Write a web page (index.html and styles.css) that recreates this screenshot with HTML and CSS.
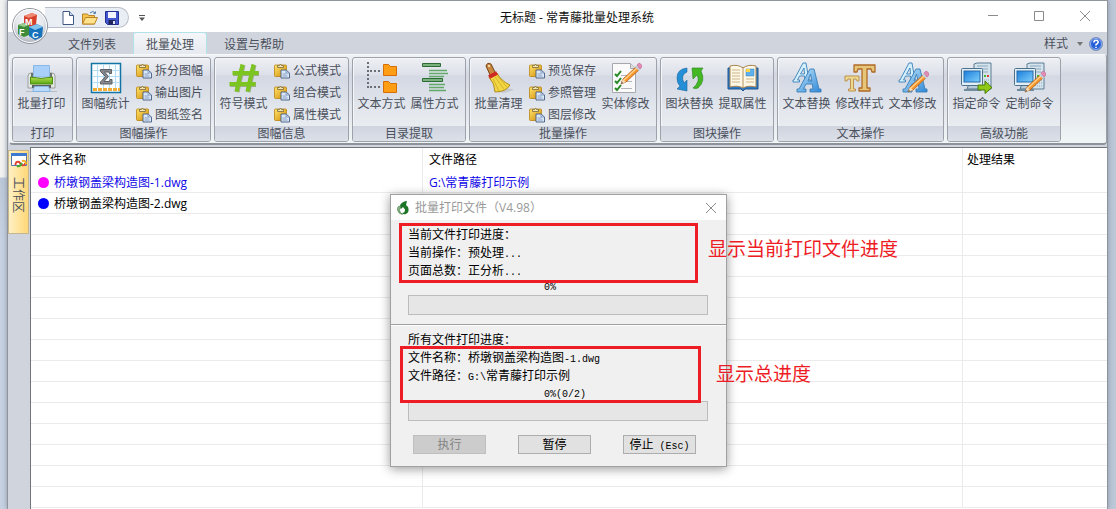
FILE: index.html
```html
<!DOCTYPE html>
<html lang="zh-CN">
<head>
<meta charset="utf-8">
<title>无标题 - 常青藤批量处理系统</title>
<link rel="stylesheet" href="styles.css">
</head>
<body>
<svg class="defs" aria-hidden="true">
  <defs>
    <linearGradient id="gBlue" x1="0" y1="0" x2="1" y2="1"><stop offset="0" stop-color="#c4e8fc"/><stop offset="1" stop-color="#2c87d8"/></linearGradient>
    <linearGradient id="gScreen" x1="0" y1="0" x2="1" y2="1"><stop offset="0" stop-color="#1c7fdc"/><stop offset="1" stop-color="#7fd0fb"/></linearGradient>
    <linearGradient id="gGold" x1="0" y1="0" x2="1" y2="1"><stop offset="0" stop-color="#ffe56b"/><stop offset="1" stop-color="#d18a08"/></linearGradient>
    <linearGradient id="gGreen" x1="0" y1="0" x2="0" y2="1"><stop offset="0" stop-color="#b4e04a"/><stop offset="1" stop-color="#5aa616"/></linearGradient>
    <radialGradient id="gOrb" cx=".5" cy=".35" r=".65"><stop offset="0" stop-color="#fff"/><stop offset=".6" stop-color="#e4e7ec"/><stop offset="1" stop-color="#a9aeb8"/></radialGradient>
    <symbol id="paste" viewBox="0 0 16 16">
      <rect x=".5" y="2" width="12" height="11.500" rx="1" fill="url(#gGold)" stroke="#b98414" stroke-width=".8"/>
      <path d="M3.500 4.500V2.500H5.500Q6.500-.5 7.500 2.500H9.500V4.500z" fill="#f2e4b0" stroke="#7a6a38" stroke-width=".8"/>
      <path d="M7 7h5l3.500 3v5H7z" fill="#dbe8f8" stroke="#445a80" stroke-width=".9"/>
      <path d="M12 7v3h3.500M8.500 11h4M8.500 13h5" fill="none" stroke="#7d96bd" stroke-width=".9"/>
    </symbol>
    <symbol id="pencil" viewBox="0 0 32 32">
      <path d="M11 26l2-5L27 8l3 3-14 13z" fill="#f8962a" stroke="#b3601c" stroke-width=".8"/>
      <path d="M14 22L28 9" stroke="#ffd592" stroke-width="1.200"/>
      <path d="M25 9l2-2 4 4-2 2z" fill="#c9ced6"/>
      <path d="M27 7l2-2q3 1 3 4l-2 2z" fill="#e58bb5" stroke="#b0608a" stroke-width=".5"/>
      <path d="M11 26l2-5 3 3z" fill="#f4dcb4"/><path d="M11 26l1-2 1 1z" fill="#333"/>
    </symbol>
    <symbol id="computer" viewBox="0 0 32 32">
      <path d="M13 2l3-1h14v26H13z" fill="#d5e3ed" stroke="#5c7d94"/>
      <path d="M16 4h11M16 7h11M16 10h11" stroke="#8ca9bd"/>
      <path d="M23 14h2" stroke="#3dbb2c" stroke-width="2"/><path d="M26 14h2" stroke="#e23a35" stroke-width="2"/>
      <path d="M23 18h5M23 21h5M23 24h5" stroke="#8aa5b6" stroke-dasharray="1 1"/>
      <path d="M8 22h9l1 5H6z" fill="#b6cad7" stroke="#587489"/>
      <path d="M3 28h17" stroke="#6f8b9d" stroke-width="2"/>
      <rect x=".5" y="6.500" width="21" height="17" rx="1" fill="#e2eef5" stroke="#4d718a"/>
      <rect x="3" y="9" width="16" height="11" fill="url(#gScreen)" stroke="#256aac"/>
    </symbol>
    <symbol id="letters" viewBox="0 0 32 32">
      <g stroke-linejoin="round" stroke="#3a7fb8" stroke-width=".9">
        <path d="M2 18h1L12 1h3l3 17h2v2h-7v-2h1l-.5-4H8.500l-2 4h2v2H2zM9.500 12h4L13 6z" fill="#d4f0fc"/>
        <path d="M6 27h2L19 7h4l5 20h2v3H19v-3h3l-.7-5H15l-2.500 5H15v3H6zM17 19h4l-1.500-7z" fill="url(#gBlue)"/>
      </g>
    </symbol>
  </defs>
</svg>

<main class="window">
  <header class="titlebar">
    <button class="orb" aria-label="应用菜单">
      <svg viewBox="0 0 38 38"><circle cx="19" cy="19" r="17.500" fill="url(#gOrb)" stroke="#8d929b"/><circle cx="19" cy="19" r="16.500" fill="none" stroke="#fff"/>
        <path d="M13 9l8-3 5 2-1 10-8 2-4-3z" fill="#d8402c"/><path d="M13 9l8-3 5 2-8 3z" fill="#f08a72"/><path d="M7 18l6-2 5 2v10l-5 2-6-3z" fill="#3d8c3a"/><path d="M7 18l6-2 5 2-5 2z" fill="#9acb8d"/><path d="M18 20l8-3 6 3-1 10-7 3-6-4z" fill="#1572bb"/><path d="M18 20l8-3 6 3-8 3z" fill="#83c3ec"/>
        <text x="14" y="18" class="cube">M</text><text x="8" y="28" class="cube">F</text><text x="21" y="31" class="cube">C</text></svg>
    </button>
    <nav class="quick" aria-label="快速访问">
      <button aria-label="新建"><svg viewBox="0 0 16 16"><path d="M3 1.500h6.500l4 4v9H3z" fill="#fff" stroke="#3e5880"/><path d="M9.500 1.500v4h4" fill="#cbdcf1" stroke="#3e5880"/></svg></button>
      <button aria-label="打开"><svg viewBox="0 0 16 16"><path d="M.5 14V4h5l1 1.500h6V14z" fill="#f6c54c" stroke="#b98326"/><path d="M.5 14l3-6.500h12L12.500 14z" fill="#ffe38c" stroke="#b98326"/><path d="M8 3q3-3 5.500 0V1.500M13.500 3.500h-2" fill="none" stroke="#4e7aa5"/></svg></button>
      <button aria-label="保存"><svg viewBox="0 0 16 16"><path d="M1.500 1.500h13v13h-11l-2-2z" fill="#4358cf" stroke="#252f93"/><path d="M4 2h8v6H4z" fill="#f2f5ff"/><path d="M4.500 10h7v4.500h-7z" fill="#20265c"/><path d="M9 11h2v3H9z" fill="#dce2fa"/></svg></button>
    </nav>
    <button class="quickmore" aria-label="自定义"><svg viewBox="0 0 6 8"><path d="M0 1.500h6" stroke="#555"/><path d="M0 3.500h6L3 7z" fill="#555"/></svg></button>
    <h1>无标题 - 常青藤批量处理系统</h1>
    <div class="winctl">
      <button aria-label="最小化"><svg viewBox="0 0 12 12"><path d="M1 5.500h10"/></svg></button>
      <button aria-label="最大化"><svg viewBox="0 0 12 12"><path d="M1.500 1.500h9v9h-9z"/></svg></button>
      <button aria-label="关闭"><svg viewBox="0 0 12 12"><path d="M1 1l10 10M11 1L1 11"/></svg></button>
    </div>
  </header>

  <div class="tabs">
    <button>文件列表</button>
    <button class="active">批量处理</button>
    <button>设置与帮助</button>
    <button class="style">样式<i></i></button>
    <button class="help" aria-label="帮助"><svg viewBox="0 0 14 14"><circle cx="7" cy="7" r="6.500" fill="#2761d8" stroke="#8093bd"/><circle cx="7" cy="7" r="5.500" fill="none" stroke="#bcd2f8" stroke-width=".7"/><path d="M4.800 5.500Q5 3.300 7 3.300T9.200 5.200Q9.200 6.300 7 7.500V8.500M7 9.800V11" fill="none" stroke="#fff" stroke-width="1.500"/></svg></button>
  </div>

  <div class="ribbon">
    <section class="group"><div class="items">
      <button class="big"><svg viewBox="0 0 32 32"><path d="M2 14q0-3 3-3h21q3 0 3 3v12H2z" fill="#e4e7e6" stroke="#9ba19f"/><path d="M5 11h3v6H5zM23 11h3v6h-3z" fill="#6d7371"/><path d="M7.500 3.500h16V15h-16z" fill="#a9d0fa" stroke="#8bb8e6"/><path d="M4.500 15q11 3 22 0v7h-22z" fill="url(#gGreen)" stroke="#4d9010"/><path d="M6 23h19v3H6z" fill="#5b605f"/><path d="M8.500 24.500h14l2 5h-18z" fill="#b9dafb" stroke="#86b3e0"/><path d="M0 29.500h6M25 29.500h6" stroke="#b7bcc2"/></svg>批量打印</button>
    </div><h2>打印</h2></section>

    <section class="group"><div class="items">
      <button class="big"><svg viewBox="0 0 32 32"><path d="M1.500 1.500h29v29h-29z" fill="#fafdff" stroke="#1374a5" stroke-width="1.500"/><path d="M7.500 2v24M13.500 2v24M19.500 2v24M25.500 2v24M2 8.500h28M2 14.500h28M2 20.500h28" stroke="#b5dcf5"/><path d="M3 27.500h27" stroke="#f2ad34" stroke-width="3" stroke-dasharray="4 1"/><path d="M10.500 7.500h11v4h-2l-.5-1.500h-4.500l4 4.500-4.500 5h5.500l.5-2h2v4.500h-11.500v-2l5-5.500-5-5z" fill="#85898e" stroke="#5b5f64"/></svg>图幅统计</button>
      <div class="stack"><button><svg><use href="#paste"/></svg>拆分图幅</button><button><svg><use href="#paste"/></svg>输出图片</button><button><svg><use href="#paste"/></svg>图纸签名</button></div>
    </div><h2>图幅操作</h2></section>

    <section class="group"><div class="items">
      <button class="big"><svg viewBox="0 0 32 32"><path d="M15 3l-6 27M26 3l-6 27M5 11.500h26M2 22.500h26" fill="none" stroke="#9caf82" stroke-width="5"/><path d="M14.500 2.500l-6 27M25.500 2.500l-6 27M4.500 11h26M1.500 22h26" fill="none" stroke="#7cc41f" stroke-width="4"/></svg>符号模式</button>
      <div class="stack"><button><svg><use href="#paste"/></svg>公式模式</button><button><svg><use href="#paste"/></svg>组合模式</button><button><svg><use href="#paste"/></svg>属性模式</button></div>
    </div><h2>图幅信息</h2></section>

    <section class="group"><div class="items">
      <button class="big"><svg viewBox="0 0 32 32"><path d="M2 0v26M4 9h12M4 25h12" fill="none" stroke="#6b6f75" stroke-width="2" stroke-dasharray="2 2"/><path id="f" d="M17.500 2.500h5l2 2h6v9h-13z" fill="#ff9d15" stroke="#d56e04"/><use href="#f" y="17"/></svg>文本方式</button>
      <button class="big"><svg viewBox="0 0 32 32"><path d="M3.500 1.500h18v3h-18zM3.500 16.500h20v3h-20z" fill="#79b27c" stroke="#2c6a36"/><path d="M10 8.500h18M10 11.500h19M10 14.500h15M10 22.500h16M10 25.500h15M10 28.500h17" stroke="#62a96a" stroke-width="1.500"/></svg>属性方式</button>
    </div><h2>目录提取</h2></section>

    <section class="group"><div class="items">
      <button class="big"><svg viewBox="0 0 32 32"><path d="M10 29q12-5 21-1l-10 3z" fill="#c5c8ce"/><path d="M3 4q1-4 5-2l5 10-5 3z" fill="#ca8740" stroke="#754414"/><circle cx="6" cy="4" r="1" fill="#fff2ce"/><path d="M6 15l8-4q4 8 13 12-4 7-15 7 0-8-6-15z" fill="#f2d744" stroke="#b08d18"/><path d="M10 17l6 12M12 15l9 12M14 14l10 11" stroke="#d6b129"/><path d="M6 15l8-4" stroke="#cf2924" stroke-width="4"/></svg>批量清理</button>
      <div class="stack"><button><svg><use href="#paste"/></svg>预览保存</button><button><svg><use href="#paste"/></svg>参照管理</button><button><svg><use href="#paste"/></svg>图层修改</button></div>
      <button class="big"><svg viewBox="0 0 32 32"><path d="M2.500 1.500h18l5 5v24h-23z" fill="#fafafa" stroke="#a5a8ac"/><path d="M20.500 1.500v5h5" fill="#ddd" stroke="#a5a8ac"/><path d="M11 13.500h11M11 19.500h11M11 26.500h11" stroke="#b0b3b7"/><path d="M5 12l2 2 4-5M5 19l2 2 4-5M5 26l2 2 4-5" fill="none" stroke="#278a25" stroke-width="2"/><use href="#pencil" y="-4"/></svg>实体修改</button>
    </div><h2>批量操作</h2></section>

    <section class="group"><div class="items">
      <button class="big"><svg viewBox="0 0 32 32"><path d="M13 6Q3 7 3 16q0 5 3 8l-3 3 10 2V18l-3 3Q6 13 13 10z" fill="#248ed6" stroke="#17649e" stroke-width=".6"/><path d="M18 6h11l-2 3q5 10-3 17-3 1-5 0 8-7 4-13l-4 4z" fill="#43b823" stroke="#26831a" stroke-width=".6"/></svg>图块替换</button>
      <button class="big"><svg viewBox="0 0 32 32"><path d="M1 6h30v21H18l-2 2-2-2H1z" fill="#2d78c0" stroke="#1e5793"/><path d="M3 4q8-2 13 2 5-4 13-2v21q-8-2-13 1-5-3-13-1z" fill="#fff8e6" stroke="#a7844e"/><path d="M16 6v20" stroke="#b3935f"/><path d="M5 8h8M5 11h8M5 14h8M5 17h8M5 20h8M19 17h8M19 20h8" stroke="#ccb58b"/><path d="M19 7h8v7h-8z" fill="#5eb1ed" stroke="#347fb7" stroke-width=".5"/><path d="M19 7h4v3h-4z" fill="#fbd448"/></svg>提取属性</button>
    </div><h2>图块操作</h2></section>

    <section class="group"><div class="items">
      <button class="big"><svg><use href="#letters"/></svg>文本替换</button>
      <button class="big"><svg viewBox="0 0 32 32"><g stroke-linejoin="round"><path d="M1 14h14v5h-2l-1-2H9.500v10h2v2h-7v-2h2V17H4l-1 2H1z" fill="#ecd88e" stroke="#bf9250"/><path d="M10 3h21v7h-3l-1-3h-4v19h3v3H15v-3h3V7h-4l-1 3h-3z" fill="#e6c577" stroke="#b06a28" stroke-width="1.300"/></g></svg>修改样式</button>
      <button class="big"><svg viewBox="0 0 32 32"><use href="#letters"/><use href="#pencil" y="4"/></svg>文本修改</button>
    </div><h2>文本操作</h2></section>

    <section class="group"><div class="items">
      <button class="big"><svg viewBox="0 0 32 32"><use href="#computer"/><path d="M17 23h7v-4l7 6.500-7 6V28h-7z" fill="#8fc817" stroke="#497c0b"/></svg>指定命令</button>
      <button class="big"><svg viewBox="0 0 32 32"><use href="#computer"/><use href="#pencil" y="4"/></svg>定制命令</button>
    </div><h2>高级功能</h2></section>
  </div>

  <div class="work">
    <aside><button class="side"><svg viewBox="0 0 16 16"><path d="M.5 1.500h15v12H.5z" fill="#fff" stroke="#5874aa"/><path d="M0 1h16v3H0z" fill="#3f7ad1"/><path d="M4.500 13q0-4 3.500-3l3 3q3 1 3-2" fill="none" stroke="#e1442c" stroke-width="2"/><path d="M6 14q3 1 5-3" fill="none" stroke="#44a832" stroke-width="2"/><path d="M11 9q4-1 4 3" fill="none" stroke="#f1ad22" stroke-width="2"/></svg><span>工作区</span></button></aside>
    <div class="list">
      <table>
        <colgroup><col class="c1"><col class="c2"><col></colgroup>
        <thead><tr><th>文件名称</th><th>文件路径</th><th>处理结果</th></tr></thead>
        <tbody>
          <tr class="current"><td><b class="dot pink"></b>桥墩钢盖梁构造图-1.dwg</td><td>G:\常青藤打印示例</td><td></td></tr>
          <tr><td><b class="dot"></b>桥墩钢盖梁构造图-2.dwg</td><td></td><td></td></tr>
          <tr><td></td><td></td><td></td></tr><tr><td></td><td></td><td></td></tr><tr><td></td><td></td><td></td></tr>
          <tr><td></td><td></td><td></td></tr><tr><td></td><td></td><td></td></tr><tr><td></td><td></td><td></td></tr>
          <tr><td></td><td></td><td></td></tr><tr><td></td><td></td><td></td></tr><tr><td></td><td></td><td></td></tr>
          <tr><td></td><td></td><td></td></tr><tr><td></td><td></td><td></td></tr><tr><td></td><td></td><td></td></tr>
          <tr><td></td><td></td><td></td></tr><tr><td></td><td></td><td></td></tr>
        </tbody>
      </table>
    </div>
  </div>
</main>

<section class="dialog" role="dialog" aria-labelledby="dlg">
  <header>
    <svg viewBox="0 0 14 14"><path d="M3 5Q1 6 1.500 9q1 4 5 4.500-3-2-3-4.500 0-2 2-2.500z" fill="#8bb388" stroke="#3c7a3a" stroke-width=".6"/><path d="M4 4q3-4 7-4l-1 4 2 2q2 5-2 7-3 1-4-1 3 0 3-3.500L7 6 5 8z" fill="#1d7526"/><circle cx="6.500" cy="9" r="1.500" fill="#fff"/></svg>
    <h2 id="dlg">批量打印文件（V4.98）</h2>
    <button aria-label="关闭"><svg viewBox="0 0 12 12"><path d="M1 1l10 10M11 1L1 11"/></svg></button>
  </header>
  <div class="part">
    <p>当前文件打印进度：</p>
    <p>当前操作：预处理<span>...</span></p>
    <p>页面总数：正分析<span>...</span></p>
    <p class="pct"><span>0%</span></p>
    <div class="bar" role="progressbar" aria-label="当前文件" aria-valuenow="0"></div>
  </div>
  <div class="part total">
    <p>所有文件打印进度：</p>
    <p>文件名称：桥墩钢盖梁构造图<span>-1.dwg</span></p>
    <p>文件路径：<span>G:\</span>常青藤打印示例</p>
    <p class="pct"><span>0%(0/2)</span></p>
    <div class="bar" role="progressbar" aria-label="所有文件" aria-valuenow="0"></div>
  </div>
  <div class="actions"><button disabled>执行</button><button>暂停</button><button>停止<span> (Esc)</span></button></div>
  <div class="mark mark-file"></div>
  <div class="mark mark-total"></div>
  <div class="note note-file">显示当前打印文件进度</div>
  <div class="note note-total">显示总进度</div>
</section>
</body>
</html>
```
FILE: styles.css
```css
* { box-sizing: border-box; }
body {
  margin: 0; height: 100vh; overflow: hidden; position: relative;
  padding: 0 8px 0 7px;
  background: linear-gradient(90deg, transparent 50%, #bcc7d7 50%), linear-gradient(#f2f2f2 177px, #bcc7d7 178px, #c6d2e2 240px);
  font: 12px/16px "Open Sans", "Noto Sans CJK SC", sans-serif;
  color: #4a505c;
}
button { font: inherit; color: inherit; background: none; border: 0; padding: 0; white-space: nowrap; }
h1, h2, p { margin: 0; font-weight: normal; font-size: 12px; }
svg { display: block; flex: none; }
.defs { position: absolute; width: 0; height: 0; }

.window { height: 100%; display: flex; flex-direction: column; background: #d0d4dd; border: 1px solid #8f949d; border-bottom: 0; box-shadow: 0 0 5px #8a93a3; }
.titlebar { display: grid; grid-template-columns: 37px 84px 26px 1fr 150px; align-items: center; height: 31px; background: #fff; color: #111; flex: none; }
.titlebar h1 { text-align: center; padding: 2px 0 0 42px; }
.orb { align-self: start; padding: 6px 0 0 3px; z-index: 1; height: 31px; }
.orb svg { width: 38px; height: 38px; }
.cube { font: bold 9px "Liberation Sans", sans-serif; fill: #fff; }
.quick { display: flex; gap: 6px; align-items: center; height: 21px; padding-left: 15px; border: 1px solid #b9bfca; border-left: 0; border-radius: 0 11px 11px 0; background: #e9edf4; margin-top: 2px; }
.quick svg { width: 16px; height: 16px; }
.quickmore { padding: 2px 0 0 10px; }
.quickmore svg { width: 6px; height: 8px; }
.winctl { display: flex; justify-content: space-between; padding: 0 16px 2px 30px; }
.winctl svg, .dialog header button svg { width: 12px; height: 12px; fill: none; stroke: #8b8b8b; }

.tabs { display: flex; gap: 4px; height: 22px; padding: 0 3px 0 47px; flex: none; align-items: end; }
.tabs button { height: 22px; padding: 2px 12px 0; border: 1px solid transparent; border-bottom: 0; }
.tabs .active { background: linear-gradient(#f4f6f9, #e6e9ef); border-color: #b2e3e8; border-radius: 3px 3px 0 0; }
.tabs .style { margin-left: auto; padding: 0; display: flex; gap: 9px; align-items: center; }
.style i { border: 3px solid transparent; border-top: 4px solid #777; border-bottom: 0; }
.tabs .help { padding: 0; }
.help svg { width: 14px; height: 14px; }

.ribbon { display: flex; gap: 3px; margin: 0 0 0 1px; padding: 2px 2px 1px; border: 1px solid #f7f8fa; border-right-color: #9a9ea6; border-bottom: 2px solid #8e929b; border-radius: 4px; height: 91px; flex: none;
  background: linear-gradient(#f0f2f6, #dde1ea 15%, #d2d7e2 22%, #e4e8ee 65%, #f0f6f6); }
.group { display: flex; flex-direction: column; border: 1px solid #9da1a9; border-radius: 3px; box-shadow: inset 1px 1px #f4f6f9; overflow: hidden; height: 85px;
  background: linear-gradient(#eef0f4, #dde0e9 20%, #d3d8e3 22%, #e4e8ee 65%, #edf2f2); }
.items { display: flex; padding: 4px 4px 0 2px; height: 68px; flex: none; }
.big { width: 53px; display: flex; flex-direction: column; align-items: center; }
.big svg { width: 32px; height: 32px; margin-bottom: 2px; }
.stack { width: 74px; margin-top: -2px; }
.stack button { display: flex; height: 22px; gap: 3px; padding-left: 4px; align-items: center; }
.stack svg { width: 16px; height: 16px; }
.group h2 { text-align: center; line-height: 15px; background: linear-gradient(#cfd4df, #dce0e8); flex: 1; }

.work { flex: 1; min-height: 0; display: flex; padding-top: 2px; }
aside { width: 22px; padding-top: 3px; }
.side { width: 21px; height: 84px; padding: 1px 2px; display: flex; flex-direction: column; gap: 9px; border: 1px solid #c4b68f; background: linear-gradient(90deg, #fff1c4, #ffd777); }
.side svg { width: 16px; height: 16px; }
.side span { writing-mode: vertical-rl; text-orientation: sideways; line-height: 16px; }
.list { flex: 1; min-width: 0; overflow: hidden; background: #fff; border: 1px solid #70757e; border-right: 0; border-bottom: 0; color: #000; }
table { width: 100%; table-layout: fixed; border-collapse: separate; border-spacing: 0; }
.c1 { width: 392px; }
.c2 { width: 540px; }
th, td { height: 21px; padding: 0 7px; text-align: left; font-weight: normal; border-bottom: 1px solid #ebebeb; border-right: 1px solid #ebebeb; line-height: 16px; white-space: nowrap; }
td { padding-top: 2px; }
th { height: 24px; border-bottom: 0; }
th:nth-child(2), td:nth-child(2) { padding-left: 6px; }
th:nth-child(3) { padding-left: 4px; }
th:last-child, td:last-child { border-right: 0; }
.current { color: #1008e8; }
.dot { display: inline-block; width: 11px; height: 11px; border-radius: 50%; background: #00f; margin-right: 5px; vertical-align: -1px; }
.pink { background: #f0f; }

.dialog { position: absolute; left: 390px; top: 194px; width: 337px; background: #f0f0f0; border: 1px solid #a0a0a0; box-shadow: 0 2px 10px #0006; color: #000; line-height: 18px; }
.dialog header { display: flex; align-items: center; gap: 5px; height: 25px; padding: 0 9px 0 5px; background: #fff; color: #999; }
.dialog header > svg { width: 14px; height: 14px; }
.dialog header button { margin-left: auto; }
.part { padding: 6px 18px 9px 17px; border-bottom: 1px solid #a0a0a0; }
.part span, .actions span { font: 10px "Liberation Mono", monospace; white-space: pre; }
.pct { padding-left: 136px; line-height: 12px; }
.bar { height: 20px; margin-top: 2px; background: #e6e6e6; border: 1px solid #bcbcbc; }
.total { border-top: 1px solid #fff; border-bottom: 0; padding-top: 5px; padding-bottom: 0; }
.total .pct { line-height: 16px; }
.total .bar { margin-top: 0; }
.actions { display: flex; justify-content: space-between; padding: 14px 30px 12px 22px; }
.actions button { width: 73px; height: 19px; line-height: 16px; border: 1px solid #adadad; background: #e1e1e1; }
.actions button:disabled { background: #ccc; border-color: #bfbfbf; color: #838383; }
.mark { position: absolute; border: 3px solid #ee1c25; }
.mark-file { left: 8px; top: 28px; width: 299px; height: 60px; }
.mark-total { left: 9px; top: 151px; width: 301px; height: 57px; }
.note { position: absolute; font-size: 19px; line-height: 24px; color: #ee1c25; white-space: nowrap; }
.note-file { left: 317px; top: 42px; }
.note-total { left: 325px; top: 167px; }
```
